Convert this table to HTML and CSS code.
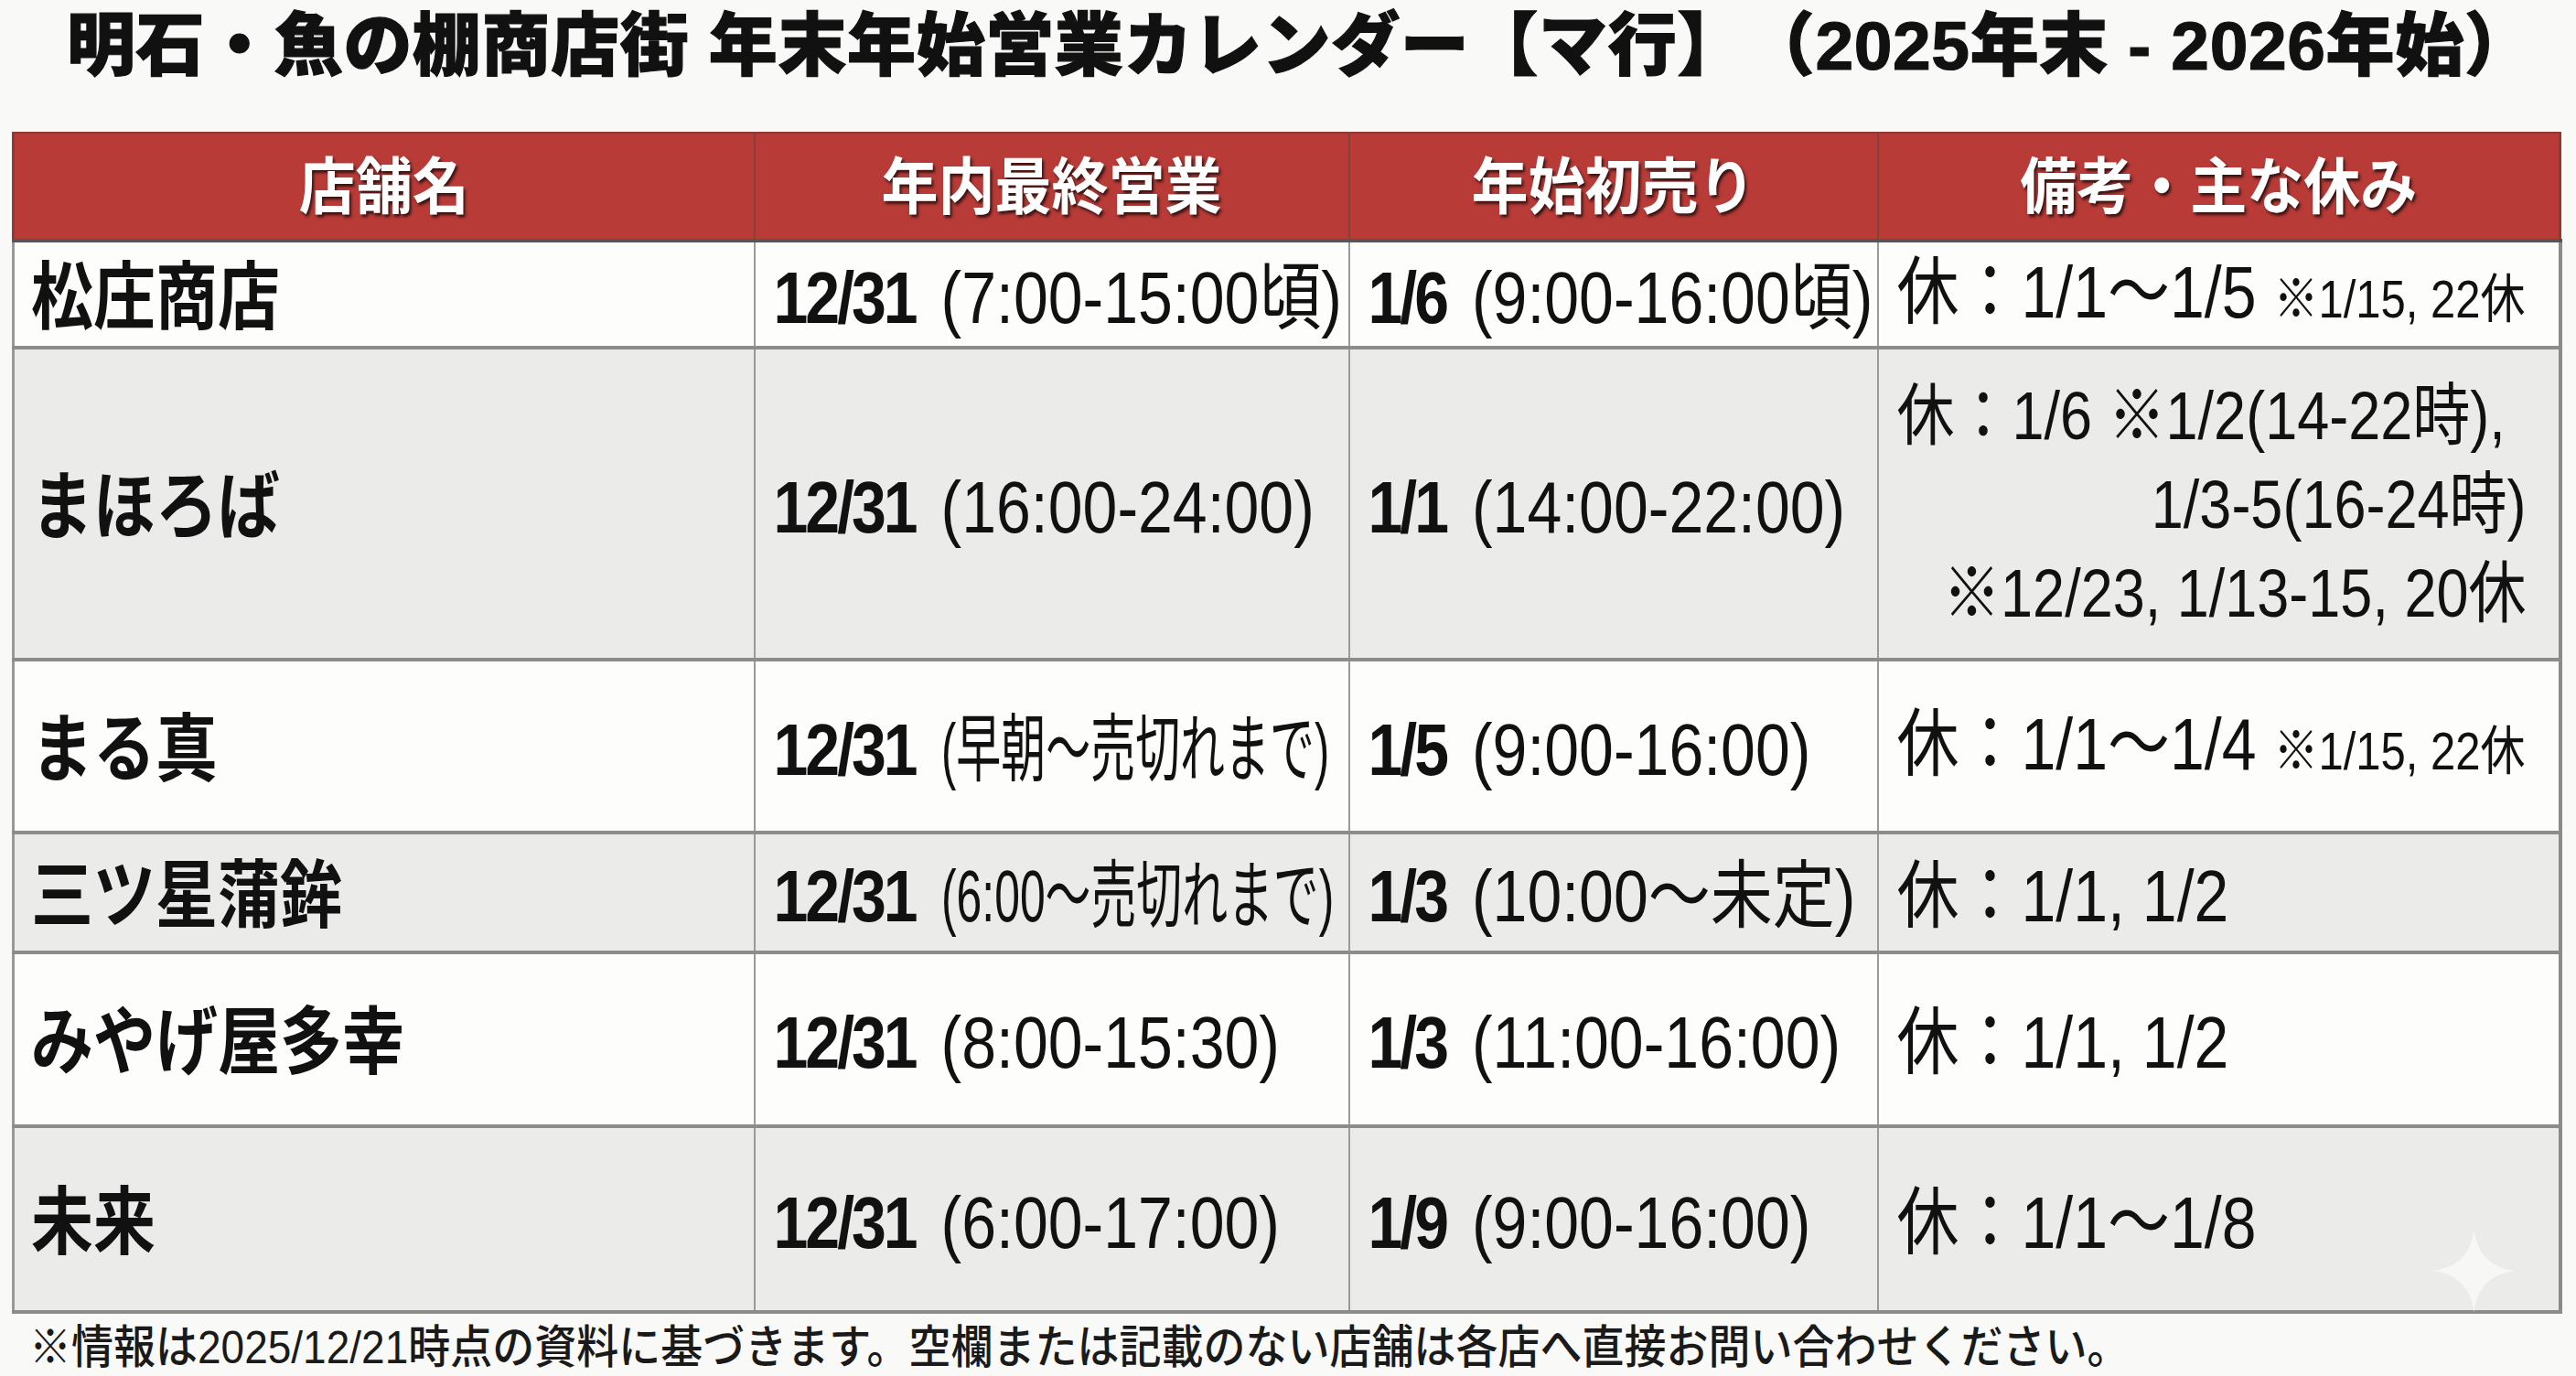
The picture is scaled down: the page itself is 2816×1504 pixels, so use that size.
FILE: index.html
```html
<!DOCTYPE html>
<html lang="ja">
<head>
<meta charset="utf-8">
<title>明石・魚の棚商店街 年末年始営業カレンダー【マ行】</title>
<link rel="stylesheet" href="styles.css">
</head>
<body>
<main class="page">
  <h1 class="title">明石・魚の棚商店街 年末年始営業カレンダー【マ行】（2025年末 - 2026年始）</h1>
  <table class="cal">
    <colgroup>
      <col class="c-name">
      <col class="c-last">
      <col class="c-first">
      <col class="c-note">
    </colgroup>
    <thead>
      <tr>
        <th><span class="ht">店舗名</span></th>
        <th><span class="ht">年内最終営業</span></th>
        <th><span class="ht">年始初売り</span></th>
        <th><span class="ht">備考・主な休み</span></th>
      </tr>
    </thead>
    <tbody>
      <tr class="r1 light">
        <td class="name"><span class="tx">松庄商店</span></td>
        <td><span class="tx"><b class="d">12/31</b> (7:00-15:00頃)</span></td>
        <td><span class="tx"><b class="d">1/6</b> (9:00-16:00頃)</span></td>
        <td class="note"><span class="tx">休：1/1～1/5 <small class="sm">※1/15, 22休</small></span></td>
      </tr>
      <tr class="r2 grey">
        <td class="name"><span class="tx">まほろば</span></td>
        <td><span class="tx"><b class="d">12/31</b> (16:00-24:00)</span></td>
        <td><span class="tx"><b class="d">1/1</b> (14:00-22:00)</span></td>
        <td class="note">
          <div class="tx multi">
            <div class="ln">休：1/6 ※1/2(14-22時),</div>
            <div class="ln rt">1/3-5(16-24時)</div>
            <div class="ln rt">※12/23, 1/13-15, 20休</div>
          </div>
        </td>
      </tr>
      <tr class="r3 light">
        <td class="name"><span class="tx">まる真</span></td>
        <td><span class="tx"><b class="d">12/31</b> <span class="sq sq-a">(早朝～売切れまで)</span></span></td>
        <td><span class="tx"><b class="d">1/5</b> (9:00-16:00)</span></td>
        <td class="note"><span class="tx">休：1/1～1/4 <small class="sm">※1/15, 22休</small></span></td>
      </tr>
      <tr class="r4 grey">
        <td class="name"><span class="tx">三ツ星蒲鉾</span></td>
        <td><span class="tx"><b class="d">12/31</b> <span class="sq sq-b">(6:00～売切れまで)</span></span></td>
        <td><span class="tx"><b class="d">1/3</b> (10:00～未定)</span></td>
        <td class="note"><span class="tx">休：1/1, 1/2</span></td>
      </tr>
      <tr class="r5 light">
        <td class="name"><span class="tx">みやげ屋多幸</span></td>
        <td><span class="tx"><b class="d">12/31</b> (8:00-15:30)</span></td>
        <td><span class="tx"><b class="d">1/3</b> (11:00-16:00)</span></td>
        <td class="note"><span class="tx">休：1/1, 1/2</span></td>
      </tr>
      <tr class="r6 grey">
        <td class="name"><span class="tx">未来</span></td>
        <td><span class="tx"><b class="d">12/31</b> (6:00-17:00)</span></td>
        <td><span class="tx"><b class="d">1/9</b> (9:00-16:00)</span></td>
        <td class="note"><span class="tx">休：1/1～1/8</span></td>
      </tr>
    </tbody>
  </table>
  <p class="foot"><span class="ft">※情報は2025/12/21時点の資料に基づきます。空欄または記載のない店舗は各店へ直接お問い合わせください。</span></p>
  <svg class="spark" viewBox="0 0 100 100" aria-hidden="true">
    <path d="M50 0 C54 30 70 46 100 50 C70 54 54 70 50 100 C46 70 30 54 0 50 C30 46 46 30 50 0 Z" fill="#f7f7f5"/>
  </svg>
</main>
</body>
</html>
```

FILE: styles.css
```css
html, body {
  margin: 0;
  padding: 0;
}

body {
  width: 2816px;
  height: 1504px;
  overflow: hidden;
  background: #f9f9f7;
  color: #111;
  font-family: "Liberation Sans", "Noto Sans CJK JP", sans-serif;
  text-spacing-trim: space-all;
}

.page {
  position: relative;
  padding: 0 19px 0 13px;
  height: 1504px;
  box-sizing: border-box;
}

.title {
  margin: 0 0 44px 0;
  height: 100px;
  line-height: 100px;
  padding-left: 60px;
  font-size: 75px;
  font-weight: 900;
  letter-spacing: 0.6px;
  white-space: nowrap;
  color: #111;
  -webkit-text-stroke: 1.2px #111;
}

.cal {
  border-collapse: collapse;
  table-layout: fixed;
  width: 2784px;
}

.c-name { width: 810px; }
.c-last { width: 650px; }
.c-first { width: 578px; }
.c-note { width: 746px; }

.cal th {
  height: 105px;
  padding: 0 0 10px 0;
  background: #b83b37;
  color: #fff;
  font-family: "Noto Sans CJK JP", sans-serif;
  font-size: 62px;
  font-weight: 700;
  text-align: center;
  vertical-align: middle;
  border-top: 2px solid #8d3a36;
  border-left: 2px solid #86403c;
  border-bottom: 4px solid #555;
  text-shadow: 2px 3px 3px rgba(0, 0, 0, 0.7);
}

.cal th:first-child {
  border-left: 3px solid #8d3a36;
}

.cal th:last-child {
  border-right: 3px solid #8d3a36;
}

.ht {
  display: inline-block;
  transform: scaleY(1.08);
}

.cal td {
  padding: 0 4px 0 20px;
  vertical-align: middle;
  white-space: nowrap;
  font-size: 68px;
  line-height: 80px;
  border-left: 2px solid #9a9a9a;
  border-right: 2px solid #9a9a9a;
  border-bottom: 4px solid #8c8c8c;
}

.cal td:first-child {
  border-left: 3px solid #999;
}

.cal td:last-child {
  border-right: 4px solid #8a8a8a;
}

.light td { background: #fdfdfc; }
.grey td { background: #ebebea; }

.r1 { height: 117px; }
.r2 { height: 341px; }
.r3 { height: 189px; }
.r4 { height: 131px; }
.r5 { height: 190px; }
.r6 { height: 203px; }

.tx {
  display: inline-block;
  vertical-align: middle;
  transform: scaleY(1.18);
}

.name {
  font-weight: 700;
  padding-left: 18px !important;
}

.d {
  font-weight: 700;
  letter-spacing: -3px;
  margin-right: 9px;
}

.sq {
  display: inline-block;
  transform-origin: left center;
}

.sq-a {
  transform: scaleX(0.72);
  margin-right: -165px;
}

.sq-b {
  transform: scaleX(0.733);
  margin-right: -156px;
}

.note {
  font-size: 63px;
}

.sm {
  font-size: 49px;
}

.multi {
  width: 688px;
  font-size: 63px;
  line-height: 82px;
}

.ln {
  white-space: nowrap;
}

.rt {
  text-align: right;
}

.foot {
  margin: 14px 0 0 19px;
  line-height: 46px;
  font-family: "Liberation Sans", "Noto Sans CJK JP", sans-serif;
  font-size: 46px;
  font-weight: 500;
  white-space: nowrap;
  color: #1a1a1a;
}

.ft {
  display: inline-block;
  transform: scaleY(1.08);
}

.spark {
  position: absolute;
  left: 2657px;
  top: 1344px;
  width: 95px;
  height: 90px;
}
```
